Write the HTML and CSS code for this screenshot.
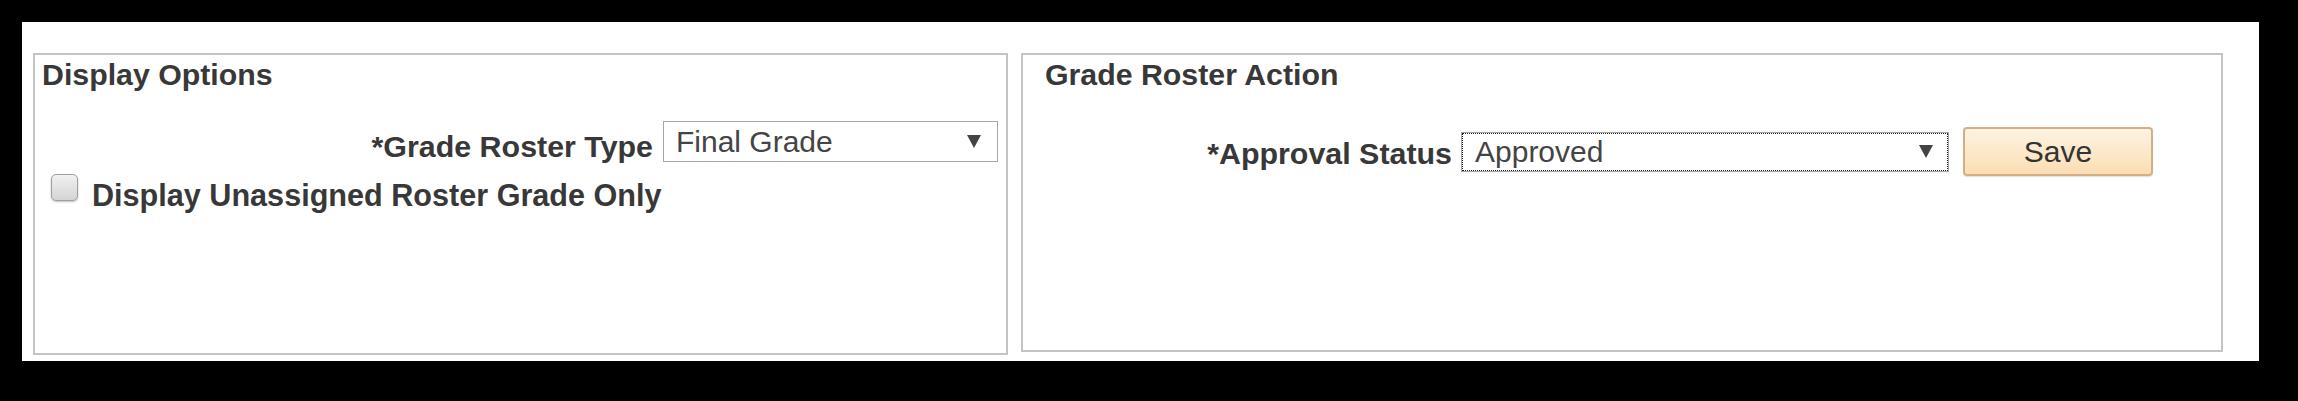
FILE: index.html
```html
<!DOCTYPE html>
<html lang="en">
<head>
<meta charset="utf-8">
<title>Grade Roster</title>
<link rel="stylesheet" href="styles.css">
</head>
<body>
<div class="page">
  <section class="panel panel-display">
    <h2 class="panel-title">Display Options</h2>
    <div class="field-row">
      <label class="field-label">*Grade Roster Type</label>
      <div class="dropdown dropdown-type">
        <span class="dropdown-value">Final Grade</span>
        <svg class="dropdown-arrow" width="14" height="13" viewBox="0 0 14 13"><polygon points="0,0 14,0 7,13" fill="#444"/></svg>
      </div>
    </div>
    <div class="check-row">
      <input type="checkbox" class="checkbox">
      <span class="check-label">Display Unassigned Roster Grade Only</span>
    </div>
  </section>
  <section class="panel panel-action">
    <h2 class="panel-title panel-title-action">Grade Roster Action</h2>
    <div class="action-row">
      <label class="action-label">*Approval Status</label>
      <div class="dropdown dropdown-status">
        <span class="dropdown-value">Approved</span>
        <svg class="dropdown-arrow" width="14" height="13" viewBox="0 0 14 13"><polygon points="0,0 14,0 7,13" fill="#444"/></svg>
      </div>
      <button class="btn-save" type="button">Save</button>
    </div>
  </section>
</div>
</body>
</html>
```
FILE: styles.css
```css
html, body {
  margin: 0;
  padding: 0;
  background: #000;
}

body {
  font-family: "Liberation Sans", Arial, sans-serif;
  color: #333;
}

.page {
  box-sizing: border-box;
  margin: 22px 0 0 22px;
  width: 2237px;
  height: 339px;
  background: #fff;
  padding: 31px 0 0 11px;
  display: flex;
  align-items: flex-start;
  gap: 13px;
}

.panel {
  box-sizing: border-box;
  border: 2px solid #c4c4c4;
  background: #fff;
}

.panel-display {
  width: 975px;
  height: 302px;
  padding: 3px 8px 0 7px;
}

.panel-action {
  width: 1202px;
  height: 299px;
  padding: 3px 0 0 22px;
}

.panel-title {
  margin: 0;
  font-size: 30.3px;
  line-height: 34px;
  font-weight: bold;
  color: #383838;
}

.field-row {
  margin-top: 29px;
  display: flex;
  justify-content: flex-end;
  align-items: flex-start;
  gap: 10px;
}

.field-label,
.action-label,
.check-label {
  font-size: 30.4px;
  line-height: 34px;
  font-weight: bold;
  color: #383838;
  white-space: nowrap;
}

.check-label {
  font-size: 30.6px;
}

.field-label {
  margin-top: 8px;
}

.dropdown {
  box-sizing: border-box;
  display: flex;
  align-items: center;
  justify-content: space-between;
  border: 1px solid #a6a6a6;
  background: #fff;
  font-size: 30px;
  line-height: 34px;
  color: #444;
}

.dropdown-type {
  width: 335px;
  height: 41px;
  padding: 0 16px 0 12px;
}

.dropdown-status {
  width: 488px;
  height: 40px;
  padding: 0 15px 0 13px;
  outline: 1px dotted #222;
  outline-offset: -2px;
}

.dropdown-arrow {
  display: block;
  flex: none;
}

.check-row {
  margin-top: 11px;
  display: flex;
  align-items: flex-start;
  gap: 14px;
  padding-left: 9px;
}

.checkbox {
  -webkit-appearance: none;
  appearance: none;
  box-sizing: border-box;
  margin: 0;
  width: 27px;
  height: 27px;
  border: 1px solid #9e9e9e;
  border-radius: 5px;
  background: linear-gradient(#f1f1f1, #d4d4d4);
  box-shadow: 0 1px 2px rgba(0, 0, 0, 0.25);
}

.check-label {
  margin-top: 4px;
}

.action-row {
  margin-top: 35px;
  display: flex;
  justify-content: flex-end;
  align-items: center;
  padding-right: 68px;
}

.action-label {
  padding-top: 2px;
  margin-right: 9px;
}

.btn-save {
  box-sizing: border-box;
  margin-left: 14px;
  width: 190px;
  height: 49px;
  border: 2px solid #d3b084;
  border-radius: 4px;
  background: linear-gradient(#fdf3e3, #fbdeb2);
  box-shadow: 0 1px 1px rgba(0, 0, 0, 0.12);
  font-family: "Liberation Sans", Arial, sans-serif;
  font-size: 30px;
  line-height: 34px;
  color: #333;
  padding: 0;
}
```
